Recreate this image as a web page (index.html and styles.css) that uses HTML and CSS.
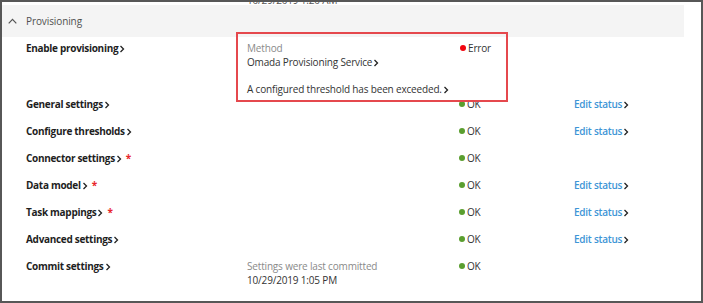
FILE: index.html
```html
<!DOCTYPE html>
<html>
<head>
<meta charset="utf-8">
<link rel="stylesheet" href="styles.css">
</head>
<body>
<div class="frame">
  <div class="cutoff"><span class="cutoff-text">10/29/2019 1:20 AM</span></div>
  <div class="header">
    <svg class="caret" width="9" height="6" viewBox="0 0 9 6"><path d="M0.7 5.3 L4.5 1.3 L8.3 5.3" fill="none" stroke="#555" stroke-width="1.2"/></svg>
    <span class="header-title">Provisioning</span>
  </div>

  <div class="row first">
    <div class="label">Enable provisioning<svg class="chev" width="6" height="8" viewBox="0 0 6 8"><path d="M1.5 1 L4.5 4 L1.5 7" fill="none" stroke="#222" stroke-width="1.3"/></svg></div>
    <div class="info">
      <div class="muted">Method</div>
      <div>Omada Provisioning Service<svg class="chev" width="6" height="8" viewBox="0 0 6 8"><path d="M1.5 1 L4.5 4 L1.5 7" fill="none" stroke="#222" stroke-width="1.3"/></svg></div>
      <div class="message">A configured threshold has been exceeded.<svg class="chev" width="6" height="8" viewBox="0 0 6 8"><path d="M1.5 1 L4.5 4 L1.5 7" fill="none" stroke="#222" stroke-width="1.3"/></svg></div>
    </div>
    <div class="status"><span class="dot red"></span>Error</div>
    <div></div>
  </div>

  <div class="row second">
    <div class="label">General settings<svg class="chev" width="6" height="8" viewBox="0 0 6 8"><path d="M1.5 1 L4.5 4 L1.5 7" fill="none" stroke="#222" stroke-width="1.3"/></svg></div>
    <div></div>
    <div class="status"><span class="dot green"></span>OK</div>
    <div class="edit">Edit status<svg class="chev" width="6" height="8" viewBox="0 0 6 8"><path d="M1.5 1 L4.5 4 L1.5 7" fill="none" stroke="#222" stroke-width="1.3"/></svg></div>
  </div>

  <div class="row">
    <div class="label">Configure thresholds<svg class="chev" width="6" height="8" viewBox="0 0 6 8"><path d="M1.5 1 L4.5 4 L1.5 7" fill="none" stroke="#222" stroke-width="1.3"/></svg></div>
    <div></div>
    <div class="status"><span class="dot green"></span>OK</div>
    <div class="edit">Edit status<svg class="chev" width="6" height="8" viewBox="0 0 6 8"><path d="M1.5 1 L4.5 4 L1.5 7" fill="none" stroke="#222" stroke-width="1.3"/></svg></div>
  </div>

  <div class="row">
    <div class="label">Connector settings<svg class="chev" width="6" height="8" viewBox="0 0 6 8"><path d="M1.5 1 L4.5 4 L1.5 7" fill="none" stroke="#222" stroke-width="1.3"/></svg><span class="req">*</span></div>
    <div></div>
    <div class="status"><span class="dot green"></span>OK</div>
    <div></div>
  </div>

  <div class="row">
    <div class="label">Data model<svg class="chev" width="6" height="8" viewBox="0 0 6 8"><path d="M1.5 1 L4.5 4 L1.5 7" fill="none" stroke="#222" stroke-width="1.3"/></svg><span class="req">*</span></div>
    <div></div>
    <div class="status"><span class="dot green"></span>OK</div>
    <div class="edit">Edit status<svg class="chev" width="6" height="8" viewBox="0 0 6 8"><path d="M1.5 1 L4.5 4 L1.5 7" fill="none" stroke="#222" stroke-width="1.3"/></svg></div>
  </div>

  <div class="row">
    <div class="label">Task mappings<svg class="chev" width="6" height="8" viewBox="0 0 6 8"><path d="M1.5 1 L4.5 4 L1.5 7" fill="none" stroke="#222" stroke-width="1.3"/></svg><span class="req">*</span></div>
    <div></div>
    <div class="status"><span class="dot green"></span>OK</div>
    <div class="edit">Edit status<svg class="chev" width="6" height="8" viewBox="0 0 6 8"><path d="M1.5 1 L4.5 4 L1.5 7" fill="none" stroke="#222" stroke-width="1.3"/></svg></div>
  </div>

  <div class="row">
    <div class="label">Advanced settings<svg class="chev" width="6" height="8" viewBox="0 0 6 8"><path d="M1.5 1 L4.5 4 L1.5 7" fill="none" stroke="#222" stroke-width="1.3"/></svg></div>
    <div></div>
    <div class="status"><span class="dot green"></span>OK</div>
    <div class="edit">Edit status<svg class="chev" width="6" height="8" viewBox="0 0 6 8"><path d="M1.5 1 L4.5 4 L1.5 7" fill="none" stroke="#222" stroke-width="1.3"/></svg></div>
  </div>

  <div class="row">
    <div class="label">Commit settings<svg class="chev" width="6" height="8" viewBox="0 0 6 8"><path d="M1.5 1 L4.5 4 L1.5 7" fill="none" stroke="#222" stroke-width="1.3"/></svg></div>
    <div class="info">
      <div class="muted">Settings were last committed</div>
      <div>10/29/2019 1:05 PM</div>
    </div>
    <div class="status"><span class="dot green"></span>OK</div>
    <div></div>
  </div>

  <div class="highlight"></div>
</div>
</body>
</html>
```
FILE: styles.css
```css
html, body {
  margin: 0;
  padding: 0;
  background: #fff;
}

.frame {
  position: relative;
  width: 703px;
  height: 303px;
  box-sizing: border-box;
  border: 2px solid #575757;
  overflow: hidden;
  font-family: "Open Sans", "Noto Sans", sans-serif;
  font-size: 10px;
  letter-spacing: -0.17px;
  color: #333;
}

.cutoff {
  display: flow-root;
  height: 3px;
  overflow: hidden;
  padding-left: 245px;
  line-height: 14px;
  color: #555;
}

.cutoff-text {
  display: block;
  margin-top: -9px;
}

.header {
  height: 32px;
  margin-right: 17px;
  background: #f4f4f4;
  display: flex;
  align-items: center;
  padding-left: 6px;
  gap: 9px;
}

.caret {
  display: block;
}

.header-title {
  color: #505050;
  font-size: 10px;
  letter-spacing: -0.1px;
}

.row {
  display: grid;
  grid-template-columns: 221px 212px 115px auto;
  padding-left: 24px;
  padding-top: 13px;
  line-height: 14px;
}

.row.first {
  padding-top: 4px;
}

.row.second {
  padding-top: 1px;
}

.label {
  font-weight: 700;
  color: #1e1e1e;
  letter-spacing: -0.3px;
  white-space: nowrap;
}

.chev {
  display: inline-block;
  vertical-align: -0.5px;
  margin-left: 1px;
}

.req {
  color: #e8262c;
  font-weight: 700;
  margin-left: 4px;
}

.info {
  white-space: nowrap;
}

.muted {
  color: #8a8a8a;
}

.message {
  margin-top: 13px;
}

.status {
  display: flex;
  align-items: center;
  height: 14px;
  white-space: nowrap;
}

.dot {
  width: 6px;
  height: 6px;
  border-radius: 50%;
  margin-right: 2px;
  flex: none;
}

.dot.green {
  background: #5a9e2f;
}

.dot.red {
  width: 6px;
  height: 6px;
  margin-left: 1px;
  margin-right: 2px;
  background: #f2050f;
}

.edit {
  color: #3d95d6;
  font-weight: 600;
  letter-spacing: -0.25px;
  white-space: nowrap;
}

.highlight {
  position: absolute;
  left: 234px;
  top: 30px;
  width: 272px;
  height: 70px;
  box-sizing: border-box;
  border: 2px solid #e5484d;
  pointer-events: none;
}
```
